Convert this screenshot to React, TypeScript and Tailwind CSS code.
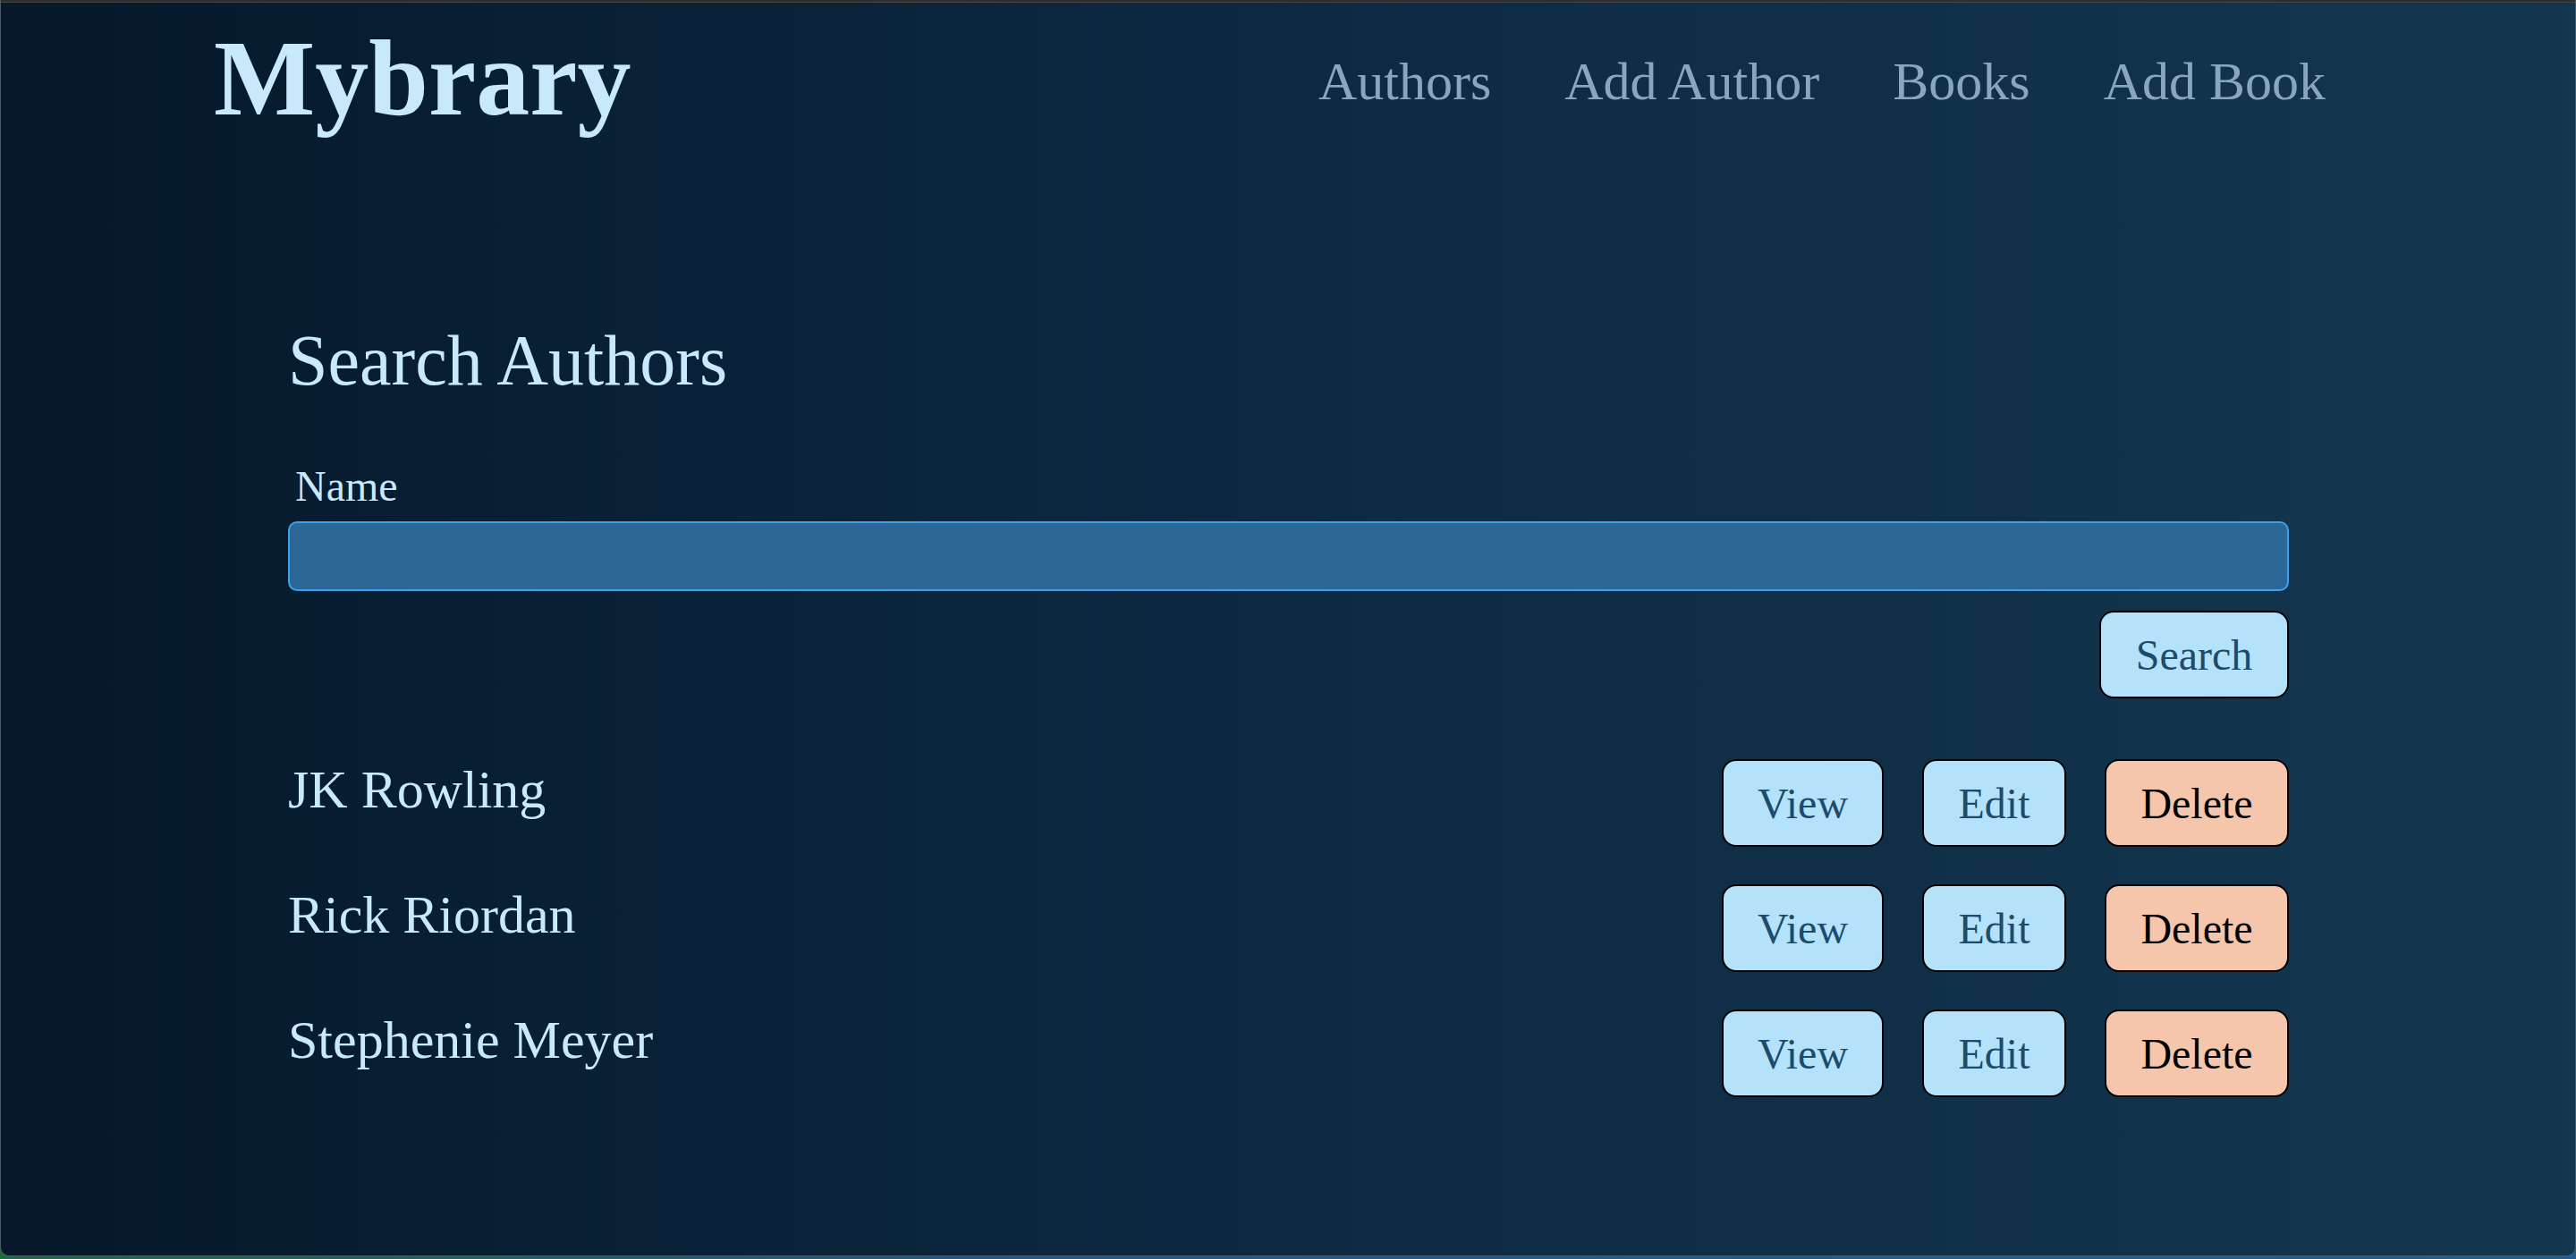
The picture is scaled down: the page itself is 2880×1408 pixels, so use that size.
const authors = ["JK Rowling", "Rick Riordan", "Stephenie Meyer"];

const navLinks = ["Authors", "Add Author", "Books", "Add Book"];

function ActionButton({ label, width, danger }: { label: string; width: string; danger?: boolean }) {
  return (
    <button
      className={`${width} h-[98px] rounded-[16px] border-2 border-black text-[48px] leading-[55px] ${
        danger ? "bg-[#f5c6ab] text-black" : "bg-[#b3e2fa] text-[#1c4b6c]"
      }`}
    >
      {label}
    </button>
  );
}

export default function App() {
  return (
    <div className="w-[2880px] h-[1408px] bg-[linear-gradient(to_right,#1a6b3f,#1b5a8a_40%,#1b5f9c)] font-['Liberation_Serif',serif]">
      <div className="h-[1405px] flex flex-col overflow-hidden rounded-b-[10px] border-x border-b border-[#4c5864] bg-[linear-gradient(to_right,#06182a,#0d2b44_55%,#13364f)]">
        {/* window top edge */}
        <div className="h-[3px] shrink-0 bg-[#2e2e2e] border-b border-[#464646]" />

        {/* Header */}
        <header className="flex items-start justify-between pl-[238px] pr-[279px] pt-[16px]">
          <h1 className="text-[120px] leading-[138px] font-bold text-[#c8e9fc]">Mybrary</h1>
          <nav className="flex gap-[82px] mt-[38px]">
            {navLinks.map((link) => (
              <a key={link} href="#" className="text-[60px] leading-[69px] text-[#88a7be]">
                {link}
              </a>
            ))}
          </nav>
        </header>

        {/* Search */}
        <main className="flex flex-col pl-[321px] pr-[320px]">
          <h2 className="mt-[200px] text-[80px] leading-[92px] text-[#c8e9fc]">Search Authors</h2>
          <label className="mt-[67px] ml-2 text-[48px] leading-[55px] text-[#c8e9fc]">Name</label>
          <input
            type="text"
            className="mt-[12px] h-[78px] rounded-[10px] border-2 border-[#3f9fe9] bg-[#2b6898] outline-none"
          />
          <div className="flex justify-end mt-[22px]">
            <button className="h-[98px] w-[212px] rounded-[16px] border-2 border-black bg-[#b3e2fa] text-[48px] leading-[55px] text-[#1c4b6c]">
              Search
            </button>
          </div>

          {/* Results */}
          <div className="mt-[68px] flex flex-col gap-[42px]">
            {authors.map((name) => (
              <div key={name} className="flex items-start justify-between">
                <span className="text-[60px] leading-[69px] text-[#c8e9fc]">{name}</span>
                <div className="flex gap-[43px]">
                  <ActionButton label="View" width="w-[181px]" />
                  <ActionButton label="Edit" width="w-[161px]" />
                  <ActionButton label="Delete" width="w-[206px]" danger />
                </div>
              </div>
            ))}
          </div>
        </main>
      </div>
    </div>
  );
}
